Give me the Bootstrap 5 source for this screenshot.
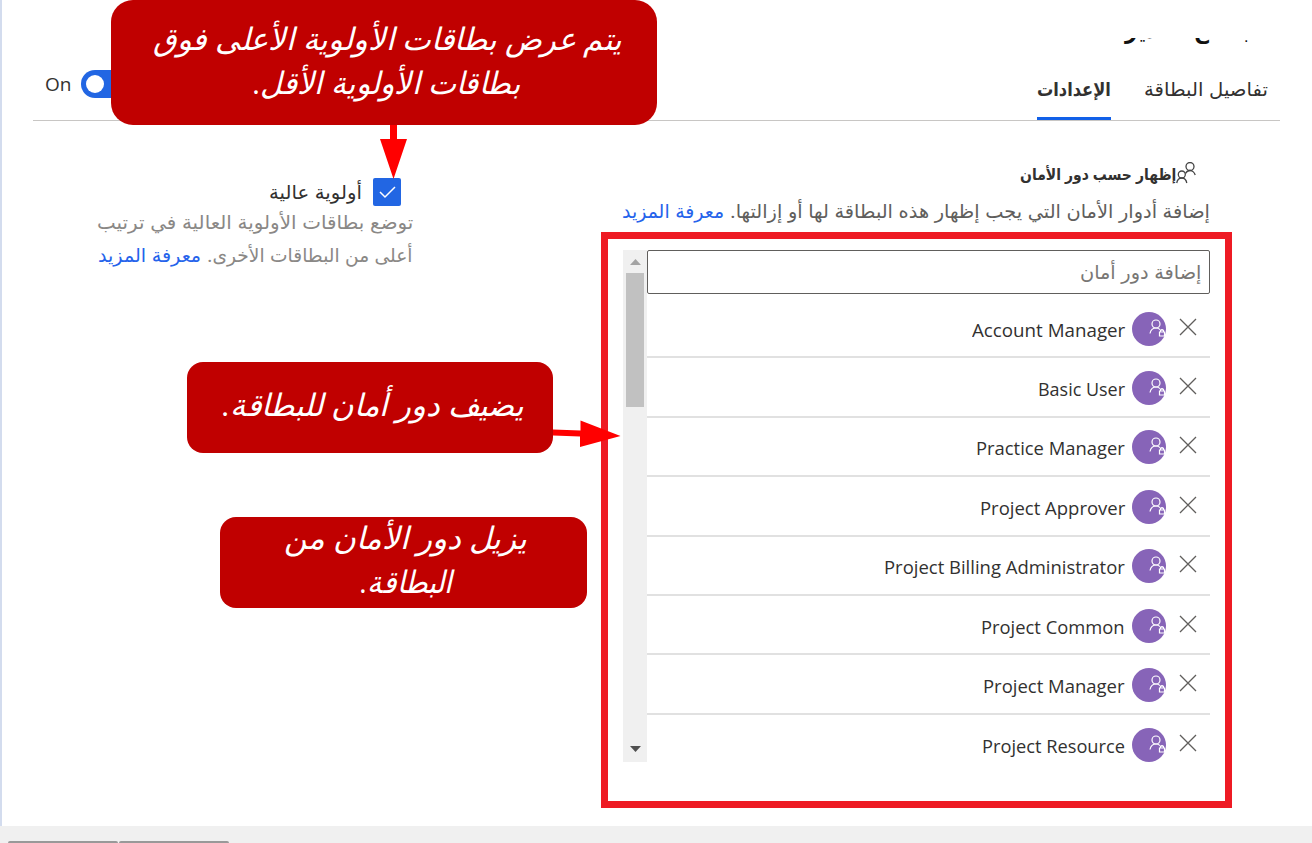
<!DOCTYPE html>
<html lang="ar" dir="rtl">
<head>
<meta charset="utf-8">
<title>الإعدادات</title>
<link rel="stylesheet" href="https://cdn.jsdelivr.net/npm/bootstrap@5.3.0/dist/css/bootstrap.min.css">
<style>
body{font-family:"Open Sans","DejaVu Sans Condensed","DejaVu Sans",sans-serif;color:#323130;background:#fff;width:1312px;height:843px;overflow:hidden;position:relative;font-size:19px;line-height:24px}
.fit{display:inline-block;white-space:nowrap;line-height:24px}
.fit>span{display:inline-block;transform-origin:100% 50%}
[dir=ltr].fit>span{transform-origin:0 50%}
.page-area{height:826px;border-left:2px solid #d3dcee}
.head-bar{height:121px;margin:0 32px 0 31px;border-bottom:1px solid #c8c6c4}
.title-clip{height:13px;margin-top:38px;overflow:hidden;color:#111;padding-right:18px}
.title-clip>div{margin-top:-25px;line-height:32px;font-weight:700;font-size:23px}
.tab-link{height:69px;padding-top:26px}
.tab-link.active{border-bottom:3px solid #1160e8;font-weight:600}
.toggle-pill{width:56px;height:28px;border-radius:14px;background:#2266e3;padding:5px}
.toggle-pill i{width:18px;height:18px;border-radius:50%;background:#fff}
.roles-col{width:589px;margin-right:102px;padding-top:41px}
.roles-head{height:24px;padding-right:14px;font-size:16px}
.soft{color:#605e5c}.hint{color:#8a8886}.lnk{color:#2563eb}
.roles-list{width:587px;height:512px;margin-top:27px;overflow:hidden}
.role-input{height:44px;border:1.5px solid #605e5c;border-radius:2px;padding:9px 8px;color:#797775}
.role-row{height:59.4px;border-bottom:2px solid #e1e1e1;padding:0 12px 0 0}
.role-row:last-child{border:0}
.persona{width:34px;height:34px;border-radius:50%;background:#8764b8;margin:2px 12px 0 7px}
.scroll-track{width:24px;background:#f0f0f0;padding:9px 3px}
.thumb{height:134px;background:#c1c1c1;margin-top:7px}
.prio-col{width:330px;margin-left:93px;padding-top:57px}
.tick{width:28px;height:28px;border-radius:2px;background:#2266e3}
.foot{height:17px;background:#f0f0f0;padding:15px 0 0 8px}
.foot i{height:2px;width:110px;background:#999;border-radius:2px 2px 0 0}
.frame{position:absolute;left:601px;top:232px;width:631px;height:576px;border:7px solid #ee1b24}
.note{position:absolute;background:#c00000;color:#fff;font-family:"Liberation Serif","DejaVu Sans Condensed","DejaVu Sans",serif;font-style:italic;font-size:31px;border-radius:16px}
.note .fit{line-height:44px;margin-left:-6px;margin-right:0}
.note .fit{margin-left:0;margin-right:-6px}
.n1{left:111px;top:0;width:546px;height:125px;border-radius:22px}
.n2{left:187px;top:362px;width:366px;height:91px}
.n3{left:220px;top:517px;width:367px;height:91px}
.arrows{position:absolute;left:0;top:0;pointer-events:none}
</style>
<script src="https://cdn.jsdelivr.net/npm/bootstrap@5.3.0/dist/js/bootstrap.bundle.min.js"></script>
</head>
<body>
<div class="page-area">
  <header class="head-bar d-flex justify-content-between">
    <div>
      <div class="title-clip"><div><span class="fit" data-w="137">اجتماع المدير</span></div></div>
      <nav class="d-flex" style="padding-right:12px;gap:33px">
        <div class="tab-link"><span class="fit" data-w="124">تفاصيل البطاقة</span></div>
        <div class="tab-link active"><span class="fit" data-w="74">الإعدادات</span></div>
      </nav>
    </div>
    <div class="d-flex align-items-center" style="height:168px;padding-left:12px;gap:10px">
      <div class="toggle-pill d-flex align-items-center justify-content-end"><i></i></div>
      <span class="fit" dir="ltr" data-w="26">On</span>
    </div>
  </header>
  <main class="d-flex justify-content-between">
    <section class="roles-col">
      <div class="roles-head d-flex fw-semibold">
        <svg width="20" height="22" viewBox="0 0 20 22" fill="none" stroke="#444" stroke-width="1.3"><circle cx="14" cy="4.500" r="4"/><path d="M9.500 11.500c1-2 2.600-3 4.500-3s4.500 1.700 5.200 4.500"/><circle cx="5.800" cy="12.500" r="3.500"/><path d="M.7 21c.6-3 2.300-5 5.100-5s4.400 2 5 5"/></svg>
        <span class="fit" data-w="156">إظهار حسب دور الأمان</span>
      </div>
      <div class="d-flex soft" style="margin-top:13px;gap:6px"><span class="fit" data-w="480">إضافة أدوار الأمان التي يجب إظهار هذه البطاقة لها أو إزالتها.</span><span class="fit lnk" data-w="102">معرفة المزيد</span></div>
      <div class="roles-list d-flex">
        <div class="flex-grow-1">
          <div class="role-input"><span class="fit" data-w="121">إضافة دور أمان</span></div>
          <div id="rows" style="padding-top:5px"></div>
        </div>
        <div class="scroll-track d-flex flex-column">
          <svg width="18" height="7" viewBox="0 0 18 7"><path d="M4 6h11L9.500 0z" fill="#a3a3a3"/></svg>
          <div class="thumb"></div>
          <svg class="mt-auto" width="18" height="7" viewBox="0 0 18 7"><path d="M4 0h11L9.500 6z" fill="#505050"/></svg>
        </div>
      </div>
    </section>
    <section class="prio-col">
      <div class="d-flex align-items-center" style="gap:11px;padding-right:24px">
        <div class="tick"><svg width="28" height="28" fill="none" stroke="#fff" stroke-width="1.5"><path d="m7 14 5 5 10-10"/></svg></div>
        <span class="fit" data-w="93">أولوية عالية</span>
      </div>
      <div class="hint" style="padding:4px 12px 0 0"><span class="fit" data-w="316">توضع بطاقات الأولوية العالية في ترتيب</span></div>
      <div class="d-flex hint" style="padding:9px 12px 0 0;gap:6px"><span class="fit" data-w="206">أعلى من البطاقات الأخرى.</span><span class="fit lnk" data-w="103">معرفة المزيد</span></div>
    </section>
  </main>
</div>
<footer class="foot d-flex" dir="ltr"><i></i><i style="margin-left:1px"></i></footer>

<div class="frame"></div>
<div class="note n1 text-center" style="padding-top:18px"><span class="fit" data-w="469">يتم عرض بطاقات الأولوية الأعلى فوق</span><br><span class="fit" data-w="267">بطاقات الأولوية الأقل.</span></div>
<div class="note n2 text-center" style="padding-top:22px"><span class="fit" data-w="302">يضيف دور أمان للبطاقة.</span></div>
<div class="note n3 text-center"><span class="fit" data-w="243">يزيل دور الأمان من</span><br><span class="fit" data-w="93">البطاقة.</span></div>
<svg class="arrows" width="1312" height="843" fill="#f00"><path d="M390 125h7v14h10l-13.500 40L380 139h10zM553 429.500l27.500 1V420.500l40 15.500-40.500 11v-10.500l-27-1z"/></svg>
<script>
// security role rows
const roles=["Account Manager|153","Basic User|87","Practice Manager|149","Project Approver|145","Project Billing Administrator|241","Project Common|144","Project Manager|142","Project Resource|143"];
document.getElementById("rows").innerHTML=roles.map(r=>{const [n,w]=r.split("|");return `<div class="role-row d-flex align-items-center">
<svg width="20" height="20" fill="none" stroke="#605e5c" stroke-width="1.3"><path d="m2 1 16 16M18 1 2 17"/></svg>
<div class="persona"><svg width="34" height="34" fill="none" stroke="#fff" stroke-width="1.200"><circle cx="24" cy="12" r="4"/><path d="M18 21.500c.7-3.400 2.700-5.500 6-5.500 1.800 0 3 .5 4 1.600M28.500 20v-1.500q1.500-1.500 3 0V20M27.500 20h5v4h-5z"/></svg></div>
<span class="fit" dir="ltr" data-w="${w}" style="padding-top:4px">${n}</span></div>`}).join("");
// condense or widen each label to its set width
document.querySelectorAll(".fit").forEach(e=>{const w=+e.dataset.w;e.innerHTML="<span>"+e.innerHTML+"</span>";const s=e.firstChild,k=w/s.offsetWidth;e.style.width=w+"px";s.style.transform="scaleX("+k+")";});
</script>
</body>
</html>
